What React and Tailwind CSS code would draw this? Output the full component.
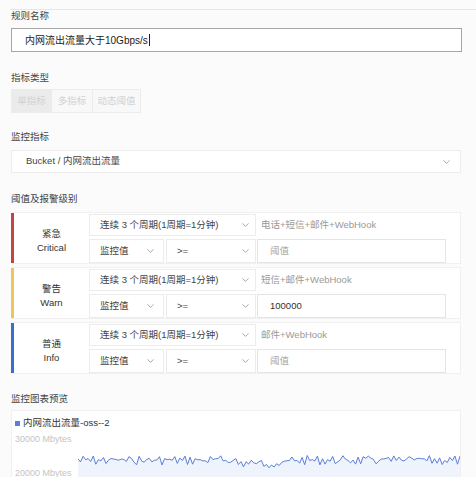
import { ChevronDown } from "lucide-react";

const font = { fontFamily: '"Liberation Sans","Noto Sans CJK SC",sans-serif' };

const rules = [
  { cn: "紧急", en: "Critical", bar: "bg-[#c2463f]", notify: "电话+短信+邮件+WebHook", value: "" },
  { cn: "警告", en: "Warn", bar: "bg-[#ecc65a]", notify: "短信+邮件+WebHook", value: "100000" },
  { cn: "普通", en: "Info", bar: "bg-[#3a6fc8]", notify: "邮件+WebHook", value: "" },
];

function Label({ children, className = "" }) {
  return (
    <div className={`text-[9.5px] leading-[12px] text-[#444] ${className}`}>
      {children}
    </div>
  );
}

function Select({ text, className = "", chevronRight = "right-[6px]" }) {
  return (
    <div
      className={`relative flex items-center bg-white border border-[#ececec] pl-[10px] text-[9.5px] text-[#444] ${className}`}
    >
      <span>{text}</span>
      <ChevronDown
        size={11}
        strokeWidth={1.4}
        className={`absolute ${chevronRight} top-1/2 -translate-y-1/2 text-[#777]`}
      />
    </div>
  );
}

function RuleCard({ rule }) {
  return (
    <div className="flex h-[52px] bg-white border border-[#f0f0f0] border-l-0">
      <div className={`w-[3px] ${rule.bar}`} />
      <div className="w-[75px] flex flex-col items-center justify-center pt-[6px] text-[9.5px] leading-[14px] text-[#333]">
        <span>{rule.cn}</span>
        <span>{rule.en}</span>
      </div>
      <div className="w-[167px] flex flex-col gap-[3px] pt-[1px]">
        <Select text="连续 3 个周期(1周期=1分钟)" className="h-[23px]" chevronRight="right-[4px]" />
        <div className="flex gap-[2px]">
          <Select text="监控值" className="w-[75px] h-[24px]" chevronRight="right-[7px]" />
          <Select text=">=" className="flex-1 h-[24px]" chevronRight="right-[4px]" />
        </div>
      </div>
      <div className="flex-1 flex flex-col gap-[3px] pt-[1px] pl-[1px]">
        <div className="h-[23px] flex items-center pl-[4px] text-[9.5px] text-[#999]">
          {rule.notify}
        </div>
        <div className="w-[189px] h-[24px] flex items-center pl-[12px] bg-white border border-[#e4e4e4] text-[9.5px]">
          {rule.value ? (
            <span className="text-[#333]">{rule.value}</span>
          ) : (
            <span className="text-[#aaa]">阈值</span>
          )}
        </div>
      </div>
    </div>
  );
}

function buildLine() {
  let seed = 7;
  const rand = () => {
    seed = (seed * 9301 + 49297) % 233280;
    return seed / 233280;
  };
  const pts = [];
  const w = 382;
  for (let i = 0; i <= 150; i++) {
    const x = (i / 150) * w;
    let base = 11;
    if (x > 160 && x < 210) base = 14;
    const y = base + (rand() - 0.5) * 7 + (i % 2 ? 1.5 : -1);
    pts.push([x, Math.max(5, Math.min(20, y))]);
  }
  return pts;
}

const linePts = buildLine();
const lineStr = linePts.map((p) => `${p[0].toFixed(1)},${p[1].toFixed(1)}`).join(" ");
const areaStr = `0,34 ${lineStr} 382,34`;

export default function App() {
  return (
    <div className="w-[476px] h-[477px] overflow-hidden bg-[#fbfbfb]" style={font}>
      <div className="h-[9px]" />
      <div className="ml-[10px] h-px bg-[#e6e6e6]" />
      <div className="px-[11px]">
        <Label className="pt-0">规则名称</Label>
        <div className="mt-[6px] w-[451px] h-[24px] flex items-center pl-[13px] bg-white border border-[#a6a6a6] text-[10px] text-[#222]">
          内网流出流量大于10Gbps/s
          <span className="inline-block w-px h-[12px] bg-[#222] ml-[1px]" />
        </div>

        <Label className="mt-[20px]">指标类型</Label>
        <div className="mt-[5px] flex h-[24px] text-[9.5px] text-[#d2d2d2]">
          <div className="w-[41px] flex items-center justify-center bg-[#ebebeb]">单指标</div>
          <div className="w-[40px] flex items-center justify-center bg-[#f8f8f8] border-y border-[#ececec]">多指标</div>
          <div className="w-[49px] flex items-center justify-center bg-[#f8f8f8] border border-[#ececec]">动态阈值</div>
        </div>

        <Label className="mt-[18px]">监控指标</Label>
        <div className="mt-[7px] relative w-[450px] h-[23px] flex items-center pl-[14px] bg-white border border-[#ececec] text-[9.5px] text-[#444]">
          Bucket / 内网流出流量
          <ChevronDown size={11} strokeWidth={1.4} className="absolute right-[8px] top-1/2 -translate-y-1/2 text-[#777]" />
        </div>

        <Label className="mt-[20px]">阈值及报警级别</Label>
        <div className="mt-[7px] w-[450px] flex flex-col gap-[3px]">
          {rules.map((r) => (
            <RuleCard key={r.en} rule={r} />
          ))}
        </div>

        <Label className="mt-[19px]">监控图表预览</Label>
        <div className="mt-[5px] w-[450px] h-[80px] bg-white border border-[#f0f0f0]">
          <div className="flex items-center gap-[3px] pl-[3px] pt-[6px] text-[9.5px] leading-[12px] text-[#333]">
            <span className="w-[5px] h-[5px] bg-[#5b7fd6]" />
            内网流出流量-oss--2
          </div>
          <div className="pl-[3px] mt-[4px] text-[9px] leading-[12px] text-[#c4c4c4]">30000 Mbytes</div>
          <div className="flex mt-[4px]">
            <div className="w-[66px]" />
            <svg width="382" height="34" viewBox="0 0 382 34" className="block">
              <polygon points={areaStr} fill="#eef3fc" />
              <polyline points={lineStr} fill="none" stroke="#5b7fd6" strokeWidth="1" />
            </svg>
          </div>
          <div className="-mt-[16px] pl-[3px] text-[9px] leading-[12px] text-[#c4c4c4]">20000 Mbytes</div>
        </div>
      </div>
    </div>
  );
}
